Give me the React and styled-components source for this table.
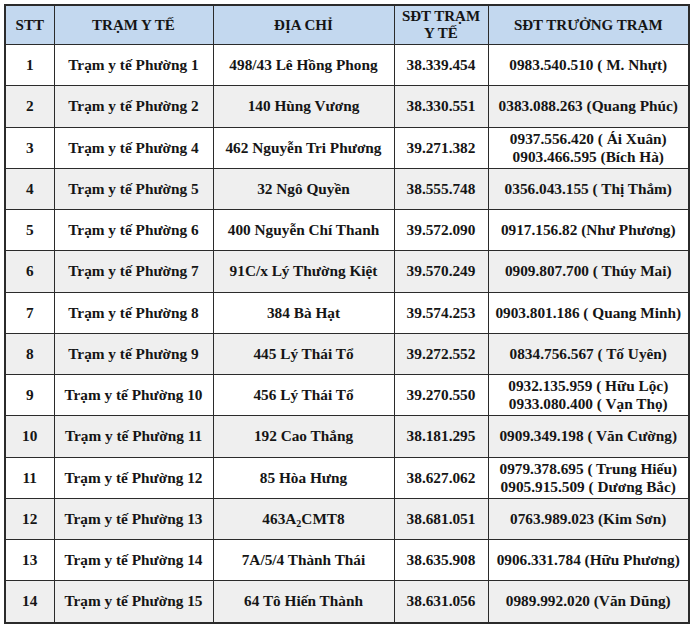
import React from "react";
import styled, { createGlobalStyle } from "styled-components";

const GlobalStyle = createGlobalStyle`
  body {
    margin: 0;
    background: #ffffff;
  }
`;

const rows = [
  ["1", "Trạm y tế Phường 1", "498/43 Lê Hồng Phong", "38.339.454", ["0983.540.510 ( M. Nhựt)"]],
  ["2", "Trạm y tế Phường 2", "140 Hùng Vương", "38.330.551", ["0383.088.263 (Quang Phúc)"]],
  ["3", "Trạm y tế Phường 4", "462 Nguyễn Tri Phương", "39.271.382", ["0937.556.420 ( Ái Xuân)", "0903.466.595 (Bích Hà)"]],
  ["4", "Trạm y tế Phường 5", "32 Ngô Quyền", "38.555.748", ["0356.043.155 ( Thị Thắm)"]],
  ["5", "Trạm y tế Phường 6", "400 Nguyễn Chí Thanh", "39.572.090", ["0917.156.82 (Như Phương)"]],
  ["6", "Trạm y tế Phường 7", "91C/x Lý Thường Kiệt", "39.570.249", ["0909.807.700 ( Thúy Mai)"]],
  ["7", "Trạm y tế Phường 8", "384 Bà Hạt", "39.574.253", ["0903.801.186 ( Quang Minh)"]],
  ["8", "Trạm y tế Phường 9", "445 Lý Thái Tổ", "39.272.552", ["0834.756.567 ( Tố Uyên)"]],
  ["9", "Trạm y tế Phường 10", "456 Lý Thái Tổ", "39.270.550", ["0932.135.959 ( Hữu Lộc)", "0933.080.400 ( Vạn Thọ)"]],
  ["10", "Trạm y tế Phường 11", "192 Cao Thắng", "38.181.295", ["0909.349.198 ( Văn Cường)"]],
  ["11", "Trạm y tế Phường 12", "85 Hòa Hưng", "38.627.062", ["0979.378.695 ( Trung Hiếu)", "0905.915.509 ( Dương Bắc)"]],
  ["12", "Trạm y tế Phường 13", null, "38.681.051", ["0763.989.023 (Kim Sơn)"]],
  ["13", "Trạm y tế Phường 14", "7A/5/4 Thành Thái", "38.635.908", ["0906.331.784 (Hữu Phương)"]],
  ["14", "Trạm y tế Phường 15", "64 Tô Hiến Thành", "38.631.056", ["0989.992.020 (Văn Dũng)"]],
];

export default function App() {
  return (
    <Page>
      <GlobalStyle />
      <Table>
        <colgroup>
          <col style={{ width: 49 }} />
          <col style={{ width: 159 }} />
          <col style={{ width: 181 }} />
          <col style={{ width: 94 }} />
          <col style={{ width: 201 }} />
        </colgroup>
        <thead>
          <tr>
            <HeadCell>STT</HeadCell>
            <HeadCell>TRẠM Y TẾ</HeadCell>
            <HeadCell>ĐỊA CHỈ</HeadCell>
            <HeadCell>SĐT TRẠM<br />Y TẾ</HeadCell>
            <HeadCell>SĐT TRƯỞNG TRẠM</HeadCell>
          </tr>
        </thead>
        <tbody>
          {rows.map(([stt, name, addr, phone, heads]) => (
            <Row key={stt} $shaded={Number(stt) % 2 === 0}>
              <Cell>{stt}</Cell>
              <Cell>{name}</Cell>
              <Cell>
                {addr ?? (
                  <>
                    463A<Sub>2</Sub>CMT8
                  </>
                )}
              </Cell>
              <Cell>{phone}</Cell>
              <Cell>
                {heads.map((h, i) => (
                  <Line key={i}>{h}</Line>
                ))}
              </Cell>
            </Row>
          ))}
        </tbody>
      </Table>
    </Page>
  );
}

const Page = styled.div`
  padding: 4px 2px 0 4px;
  width: 690px;
  box-sizing: border-box;
`;

const Table = styled.table`
  width: 684px;
  table-layout: fixed;
  border-collapse: collapse;
  border: 2px solid #2b2b2b;
  font-family: "Liberation Serif", "Times New Roman", serif;
  font-weight: bold;
  font-size: 15.3px;
  color: #151515;
`;

const HeadCell = styled.th`
  height: 38px;
  padding: 0 2px;
  background: #c3d8ef;
  border: 1.5px solid #2b2b2b;
  text-align: center;
  vertical-align: middle;
  line-height: 17px;
  font-size: 15px;
`;

const Row = styled.tr`
  background: ${(p) => (p.$shaded ? "#efefef" : "#ffffff")};
`;

const Cell = styled.td`
  height: 40.25px;
  padding: 0 2px;
  border: 1.5px solid #2b2b2b;
  text-align: center;
  vertical-align: middle;
  line-height: 18px;
  white-space: nowrap;
`;

const Line = styled.div``;

const Sub = styled.sub`
  font-size: 10px;
  vertical-align: -3px;
  line-height: 0;
`;
